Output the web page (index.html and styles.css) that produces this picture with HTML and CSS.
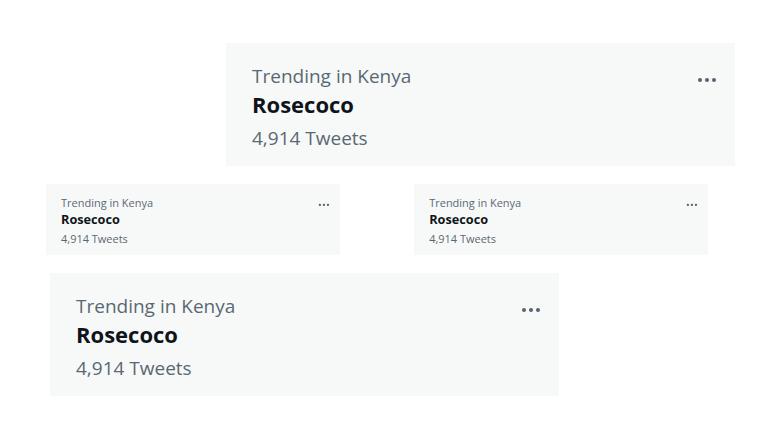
FILE: index.html
```html
<!DOCTYPE html>
<html lang="en">
<head>
<meta charset="utf-8">
<title>Trending cards</title>
<link rel="stylesheet" href="styles.css">
</head>
<body>
<main class="board">
  <div class="row row--top">
    <article class="card">
      <div class="card__text">
        <div class="card__meta">Trending in Kenya</div>
        <div class="card__title">Rosecoco</div>
        <div class="card__count">4,914 Tweets</div>
      </div>
      <svg class="card__more" viewBox="0 0 24 24" width="24" height="24" aria-hidden="true"><circle cx="5" cy="12" r="2"/><circle cx="12" cy="12" r="2"/><circle cx="19" cy="12" r="2"/></svg>
    </article>
  </div>
  <div class="row row--middle">
    <article class="card card--small">
      <div class="card__text">
        <div class="card__meta">Trending in Kenya</div>
        <div class="card__title">Rosecoco</div>
        <div class="card__count">4,914 Tweets</div>
      </div>
      <svg class="card__more" viewBox="0 0 24 24" width="24" height="24" aria-hidden="true"><circle cx="5" cy="12" r="2"/><circle cx="12" cy="12" r="2"/><circle cx="19" cy="12" r="2"/></svg>
    </article>
    <article class="card card--small">
      <div class="card__text">
        <div class="card__meta">Trending in Kenya</div>
        <div class="card__title">Rosecoco</div>
        <div class="card__count">4,914 Tweets</div>
      </div>
      <svg class="card__more" viewBox="0 0 24 24" width="24" height="24" aria-hidden="true"><circle cx="5" cy="12" r="2"/><circle cx="12" cy="12" r="2"/><circle cx="19" cy="12" r="2"/></svg>
    </article>
  </div>
  <div class="row row--bottom">
    <article class="card">
      <div class="card__text">
        <div class="card__meta">Trending in Kenya</div>
        <div class="card__title">Rosecoco</div>
        <div class="card__count">4,914 Tweets</div>
      </div>
      <svg class="card__more" viewBox="0 0 24 24" width="24" height="24" aria-hidden="true"><circle cx="5" cy="12" r="2"/><circle cx="12" cy="12" r="2"/><circle cx="19" cy="12" r="2"/></svg>
    </article>
  </div>
</main>
</body>
</html>
```
FILE: styles.css
```css
html, body {
  margin: 0;
  padding: 0;
  background: #ffffff;
}

body {
  font-family: "Open Sans", "Noto Sans", sans-serif;
  width: 768px;
  height: 432px;
  overflow: hidden;
}

.board {
  padding-top: 43px;
  display: flex;
  flex-direction: column;
}

.row {
  display: flex;
}

.row--top {
  padding-left: 226px;
}

.row--middle {
  margin-top: 18px;
  padding-left: 46px;
  gap: 74px;
}

.row--bottom {
  margin-top: 18px;
  padding-left: 50px;
}

.card {
  box-sizing: border-box;
  width: 509px;
  height: 123px;
  background: #f7f9f9;
  padding: 21px 16px 0 26px;
  display: flex;
  justify-content: space-between;
  align-items: flex-start;
}

.card--small {
  zoom: 0.578;
}

.card__text {
  display: flex;
  flex-direction: column;
}

.card__meta {
  font-size: 19px;
  line-height: 24px;
  color: #5b6872;
}

.card__title {
  margin-top: 1px;
  font-size: 22px;
  line-height: 30px;
  font-weight: 700;
  color: #0f1419;
}

.card__count {
  margin-top: 7px;
  font-size: 19px;
  line-height: 24px;
  color: #5b6872;
}

.card__more {
  margin-top: 4px;
  fill: #536471;
  flex: none;
}
```
